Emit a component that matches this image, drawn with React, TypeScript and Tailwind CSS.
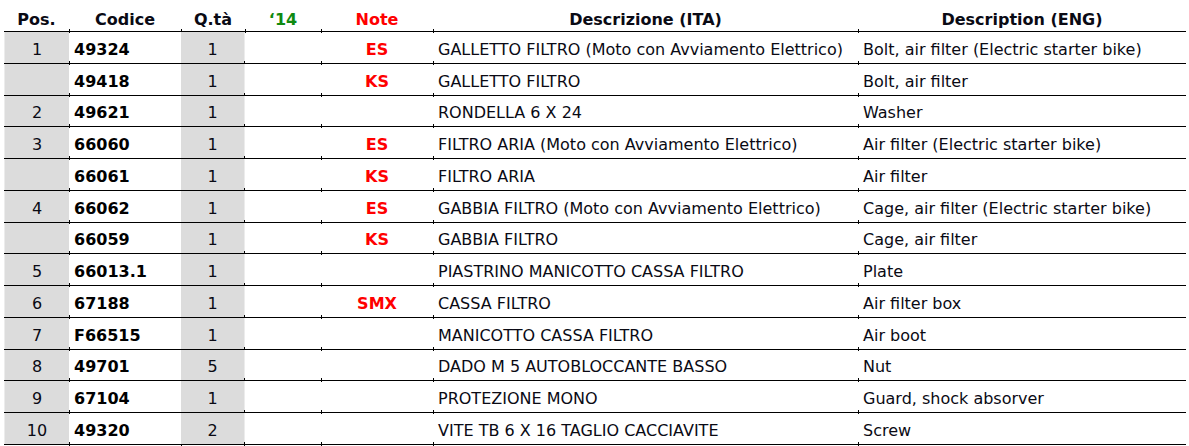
import React from 'react';

interface Row {
  pos: string;
  code: string;
  qty: string;
  note: string;
  ita: string;
  eng: string;
}

const rows: Row[] = [
  { pos: '1', code: '49324', qty: '1', note: 'ES', ita: 'GALLETTO FILTRO (Moto con Avviamento Elettrico)', eng: 'Bolt, air filter (Electric starter bike)' },
  { pos: '', code: '49418', qty: '1', note: 'KS', ita: 'GALLETTO FILTRO', eng: 'Bolt, air filter' },
  { pos: '2', code: '49621', qty: '1', note: '', ita: 'RONDELLA 6 X 24', eng: 'Washer' },
  { pos: '3', code: '66060', qty: '1', note: 'ES', ita: 'FILTRO ARIA (Moto con Avviamento Elettrico)', eng: 'Air filter (Electric starter bike)' },
  { pos: '', code: '66061', qty: '1', note: 'KS', ita: 'FILTRO ARIA', eng: 'Air filter' },
  { pos: '4', code: '66062', qty: '1', note: 'ES', ita: 'GABBIA FILTRO (Moto con Avviamento Elettrico)', eng: 'Cage, air filter (Electric starter bike)' },
  { pos: '', code: '66059', qty: '1', note: 'KS', ita: 'GABBIA FILTRO', eng: 'Cage, air filter' },
  { pos: '5', code: '66013.1', qty: '1', note: '', ita: 'PIASTRINO MANICOTTO CASSA FILTRO', eng: 'Plate' },
  { pos: '6', code: '67188', qty: '1', note: 'SMX', ita: 'CASSA FILTRO', eng: 'Air filter box' },
  { pos: '7', code: 'F66515', qty: '1', note: '', ita: 'MANICOTTO CASSA FILTRO', eng: 'Air boot' },
  { pos: '8', code: '49701', qty: '5', note: '', ita: 'DADO M 5 AUTOBLOCCANTE BASSO', eng: 'Nut' },
  { pos: '9', code: '67104', qty: '1', note: '', ita: 'PROTEZIONE MONO', eng: 'Guard, shock absorver' },
  { pos: '10', code: '49320', qty: '2', note: '', ita: 'VITE TB 6 X 16 TAGLIO CACCIAVITE', eng: 'Screw' },
];

// small tick where the column boundary meets the row line
const tick =
  "relative after:absolute after:content-[''] after:right-[-1px] after:bottom-[-2px] after:h-[4px] after:w-px after:bg-black";

export default function App() {
  return (
    <div className="w-[1189px] h-[446px] bg-white pl-[4px] text-[16px] text-[#0a0a14]" style={{ fontFamily: '"DejaVu Sans", Verdana, sans-serif' }}>
      <div className="w-[1182px]">
        {/* header */}
        <div className="flex h-[32px] border-b border-black font-bold leading-[18px]">
          <div className={`${tick} w-[65px] flex items-center justify-center pt-[8px]`}>Pos.</div>
          <div className={`${tick} w-[112px] flex items-center justify-center pt-[8px]`}>Codice</div>
          <div className={`${tick} w-[64px] flex items-center justify-center pt-[8px]`}>Q.tà</div>
          <div className={`${tick} w-[76px] flex items-center justify-center pt-[8px] text-[#108a10]`}>‘14</div>
          <div className={`${tick} w-[112px] flex items-center justify-center pt-[8px] text-[#ff0000]`}>Note</div>
          <div className={`${tick} w-[425px] flex items-center justify-center pt-[8px]`}>Descrizione (ITA)</div>
          <div className="flex-1 flex items-center justify-center pt-[8px]">Description (ENG)</div>
        </div>

        {rows.map((r, i) => (
          <div key={i} className="flex h-[31.75px] border-b border-black leading-[18px]">
            <div className={`${tick} w-[65px] bg-[#dcdcdc] border-l border-[#ececec] flex items-center justify-center pt-[5px]`}>{r.pos}</div>
            <div className={`${tick} w-[112px] flex items-center pl-[5px] pt-[5px] font-bold text-black`}>{r.code}</div>
            <div className={`${tick} w-[64px] bg-[#dcdcdc] border-r border-[#ececec] flex items-center justify-center pt-[5px]`}>{r.qty}</div>
            <div className={`${tick} w-[76px]`} />
            <div className={`${tick} w-[112px] flex items-center justify-center pt-[5px] font-bold text-[#ff0000]`}>{r.note}</div>
            <div className={`${tick} w-[425px] flex items-center pl-[5px] pt-[5px] whitespace-nowrap`}>{r.ita}</div>
            <div className="flex-1 flex items-center pl-[5px] pt-[5px] whitespace-nowrap">{r.eng}</div>
          </div>
        ))}
      </div>
    </div>
  );
}
